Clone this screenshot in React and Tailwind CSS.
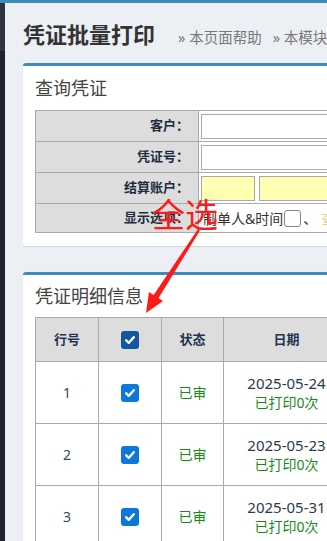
const font = { fontFamily: '"Noto Sans", "Noto Sans CJK SC", sans-serif' }

const rows = [
  { no: 1, date: '2025-05-24' },
  { no: 2, date: '2025-05-23' },
  { no: 3, date: '2025-05-31' },
]

function Check({ dark }) {
  return (
    <span
      className={
        'inline-flex w-[18px] h-[18px] items-center justify-center rounded-[3px] ' +
        (dark ? 'bg-[#13579e]' : 'bg-[#0d78dc]')
      }
    >
      <svg width="12" height="12" viewBox="0 0 12 12">
        <path d="M2.2 6.3 L4.8 8.8 L9.8 3.2" fill="none" stroke="#fff" strokeWidth="2.4" strokeLinecap="round" strokeLinejoin="round" />
      </svg>
    </span>
  )
}

function SearchTable() {
  const label = 'w-[163px] bg-[#dddddd] border border-[#aaaaaa] text-right pr-[9px] font-bold text-[13px] text-[#1d2d3d]'
  const cell = 'border border-[#aaaaaa] px-[2px]'
  return (
    <table className="border-collapse w-[560px]">
      <tbody>
        <tr className="h-[31px]">
          <td className={label}>客户：</td>
          <td className={cell}>
            <div className="h-[25px] border border-[#aaaaaa] bg-white" />
          </td>
        </tr>
        <tr className="h-[31px]">
          <td className={label}>凭证号：</td>
          <td className={cell}>
            <div className="h-[25px] border border-[#aaaaaa] bg-white" />
          </td>
        </tr>
        <tr className="h-[31px]">
          <td className={label}>结算账户：</td>
          <td className={cell}>
            <div className="flex gap-[4px]">
              <div className="w-[54px] h-[25px] border border-[#aaaaaa] bg-[#ffffb4]" />
              <div className="flex-1 h-[25px] border border-[#aaaaaa] bg-[#ffffb4]" />
            </div>
          </td>
        </tr>
        <tr className="h-[29px]">
          <td className={label}>显示选项：</td>
          <td className={cell}>
            <div className="flex items-center text-[14px] text-[#333] pl-[2px]">
              <span>制单人&amp;时间</span>
              <span className="ml-[1px] w-[17px] h-[17px] border border-[#888] rounded-[3px] bg-white" />
              <span className="ml-[2px]">、</span>
              <span className="ml-[4px] text-[#e8cf7a]">查看</span>
            </div>
          </td>
        </tr>
      </tbody>
    </table>
  )
}

function DetailTable() {
  const th = 'border border-[#aaaaaa] bg-[#dddddd] font-bold text-[13px] text-[#1d3550] text-center'
  const td = 'border border-[#aaaaaa] text-center'
  return (
    <table className="border-collapse table-fixed w-[600px]">
      <colgroup>
        <col className="w-[63px]" />
        <col className="w-[63px]" />
        <col className="w-[62px]" />
        <col className="w-[126px]" />
        <col />
      </colgroup>
      <thead>
        <tr className="h-[44px]">
          <th className={th}>行号</th>
          <th className={th}>
            <div className="flex justify-center">
              <Check dark />
            </div>
          </th>
          <th className={th}>状态</th>
          <th className={th}>日期</th>
          <th className={th}>凭证号</th>
        </tr>
      </thead>
      <tbody>
        {rows.map((r) => (
          <tr key={r.no} className="h-[62px]">
            <td className={td + ' text-[14px] text-[#34485c]'}>{r.no}</td>
            <td className={td}>
              <div className="flex justify-center">
                <Check />
              </div>
            </td>
            <td className={td + ' text-[14px] text-[#1a8a1a]'}>已审</td>
            <td className={td + ' leading-[19px]'}>
              <div className="text-[15px] text-[#2a3b4c]">{r.date}</div>
              <div className="text-[14px] text-[#1a8a1a]">已打印0次</div>
            </td>
            <td className={td} />
          </tr>
        ))}
      </tbody>
    </table>
  )
}

export default function App() {
  return (
    <div className="relative w-[327px] h-[541px] overflow-hidden flex flex-col bg-[#ecf0f5]" style={font}>
      <div className="h-[3px] shrink-0 bg-[#3c8dbc]" />
      <div className="flex flex-1 min-h-0">
        <aside className="w-[5px] shrink-0 flex flex-col">
          <div className="h-[48px] bg-[#2d3440]" />
          <div className="flex-1 bg-[#1f252e]" />
        </aside>

        <main className="flex-1 min-w-0 pl-[18px]">
          <div className="flex items-baseline pt-[13px] h-[60px] whitespace-nowrap">
            <h1 className="text-[22px] leading-[36px] font-bold text-[#333]">凭证批量打印</h1>
            <span className="ml-[23px] text-[14.5px] text-[#777]">» 本页面帮助</span>
            <span className="ml-[11px] text-[14.5px] text-[#777]">» 本模块帮助</span>
          </div>

          <section className="w-[600px] bg-white rounded-[3px] border-t-[3px] border-[#3c8dbc] shadow-[0_1px_1px_rgba(0,0,0,0.12)] px-[12px] pb-[13px]">
            <div className="h-[44px] flex items-center text-[18px] text-[#444]">查询凭证</div>
            <SearchTable />
          </section>

          <section className="mt-[26px] w-[600px] bg-white rounded-[3px] border-t-[3px] border-[#3c8dbc] shadow-[0_1px_1px_rgba(0,0,0,0.12)] px-[12px] pb-[13px]">
            <div className="h-[42px] flex items-center text-[18px] text-[#444]">凭证明细信息</div>
            <DetailTable />
          </section>
        </main>
      </div>

      <div className="absolute left-[152px] top-[198px] text-[33px] leading-none text-[#ff1a1a] whitespace-nowrap">全选</div>
      <svg className="absolute left-0 top-0 pointer-events-none" width="327" height="541">
        <polygon points="198,229 200,230.5 158,299 153,296" fill="#ff1a1a" />
        <polygon points="146,313 149,292 163,301" fill="#ff1a1a" />
      </svg>
    </div>
  )
}
